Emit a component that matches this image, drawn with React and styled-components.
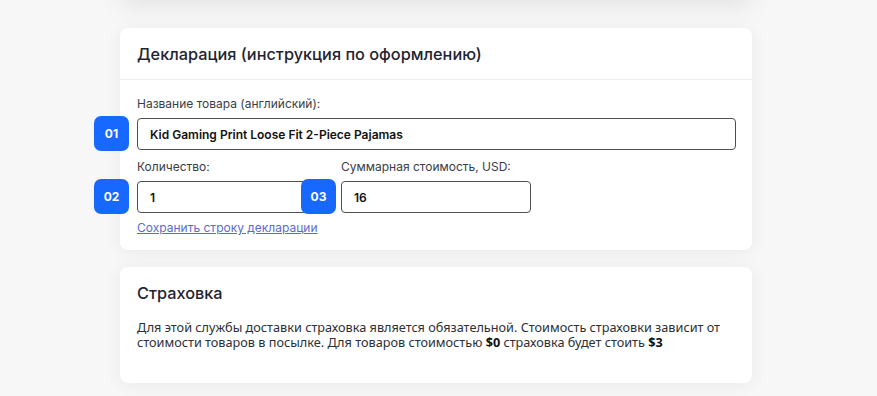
import React from "react";
import styled, { createGlobalStyle } from "styled-components";

const Global = createGlobalStyle`
  html, body { margin: 0; padding: 0; background: #f7f7f7; }
  body { font-family: Inter, "Noto Sans", sans-serif; color: #1f2430; }
  * { box-sizing: border-box; }
`;

const Page = styled.div`
  width: 877px;
  height: 396px;
  overflow: hidden;
  padding: 0 125px 0 120px;
  display: flex;
  flex-direction: column;
  gap: 17px;
`;

const Card = styled.section`
  background: #fff;
  border-radius: 8px;
  box-shadow: 0 2px 18px rgba(0, 0, 0, 0.06);
  flex-shrink: 0;
`;

const StubCard = styled(Card)`
  height: 40px;
  margin-top: -41px;
  margin-bottom: 12px;
  box-shadow: 0 6px 26px rgba(0, 0, 0, 0.09);
`;

const CardHeader = styled.div`
  height: 52px;
  padding: 0 17px;
  display: flex;
  align-items: center;
  border-bottom: 1px solid #ececec;
`;

const Title = styled.h2`
  margin: 0;
  font-family: Inter, "Noto Sans", sans-serif;
  font-size: 16.3px;
  font-weight: 500;
  color: #1f2430;
`;

const FormBody = styled.div`
  padding: 16px 17px 14px 17px;
  display: flex;
  flex-direction: column;
`;

const Row = styled.div`
  display: flex;
  gap: 34px;
  margin-top: ${(p) => p.$mt || 0}px;
`;

const Field = styled.div`
  position: relative;
  display: flex;
  flex-direction: column;
  width: ${(p) => p.$w};
`;

const Label = styled.label`
  font-size: 12px;
  color: #3a3d45;
  line-height: 16px;
  margin-bottom: 6px;
`;

const Input = styled.div`
  height: 32px;
  border: 1px solid #4d4f55;
  border-radius: 4px;
  display: flex;
  align-items: center;
  padding: 0 12px;
  font-size: 12px;
  font-weight: 600;
  color: #111;
`;

const Badge = styled.span`
  position: absolute;
  left: ${(p) => p.$left || -43}px;
  bottom: -1px;
  width: 35px;
  height: 35px;
  border-radius: 7px;
  background: #1668ff;
  color: #fff;
  font-size: 12px;
  font-weight: 700;
  display: flex;
  align-items: center;
  justify-content: center;
  z-index: 1;
`;

const Link = styled.a`
  margin-top: 7px;
  font-size: 12px;
  color: #5a6cc9;
  text-decoration: underline;
  line-height: 16px;
  cursor: pointer;
  align-self: flex-start;
`;

const InsuranceBody = styled.div`
  padding: 16px 17px 33px 17px;
`;

const Text = styled.p`
  margin: 17px 0 0;
  font-family: "Noto Sans", sans-serif;
  font-size: 12.7px;
  line-height: 15px;
  color: #2c2f36;
  b { font-weight: 700; color: #111; }
`;

export default function App() {
  return (
    <>
      <Global />
      <Page>
        <StubCard />
        <Card>
          <CardHeader>
            <Title>Декларация (инструкция по оформлению)</Title>
          </CardHeader>
          <FormBody>
            <Field $w="599px">
              <Label>Название товара (английский):</Label>
              <Badge>01</Badge>
              <Input>Kid Gaming Print Loose Fit 2-Piece Pajamas</Input>
            </Field>
            <Row $mt={9}>
              <Field $w="170px">
                <Label>Количество:</Label>
                <Badge>02</Badge>
                <Input>1</Input>
              </Field>
              <Field $w="190px">
                <Label>Суммарная стоимость, USD:</Label>
                <Badge $left={-40}>03</Badge>
                <Input>16</Input>
              </Field>
            </Row>
            <Link>Сохранить строку декларации</Link>
          </FormBody>
        </Card>
        <Card>
          <InsuranceBody>
            <Title>Страховка</Title>
            <Text>
              Для этой службы доставки страховка является обязательной. Стоимость страховки зависит от
              стоимости товаров в посылке. Для товаров стоимостью <b>$0</b> страховка будет стоить <b>$3</b>
            </Text>
          </InsuranceBody>
        </Card>
      </Page>
    </>
  );
}
